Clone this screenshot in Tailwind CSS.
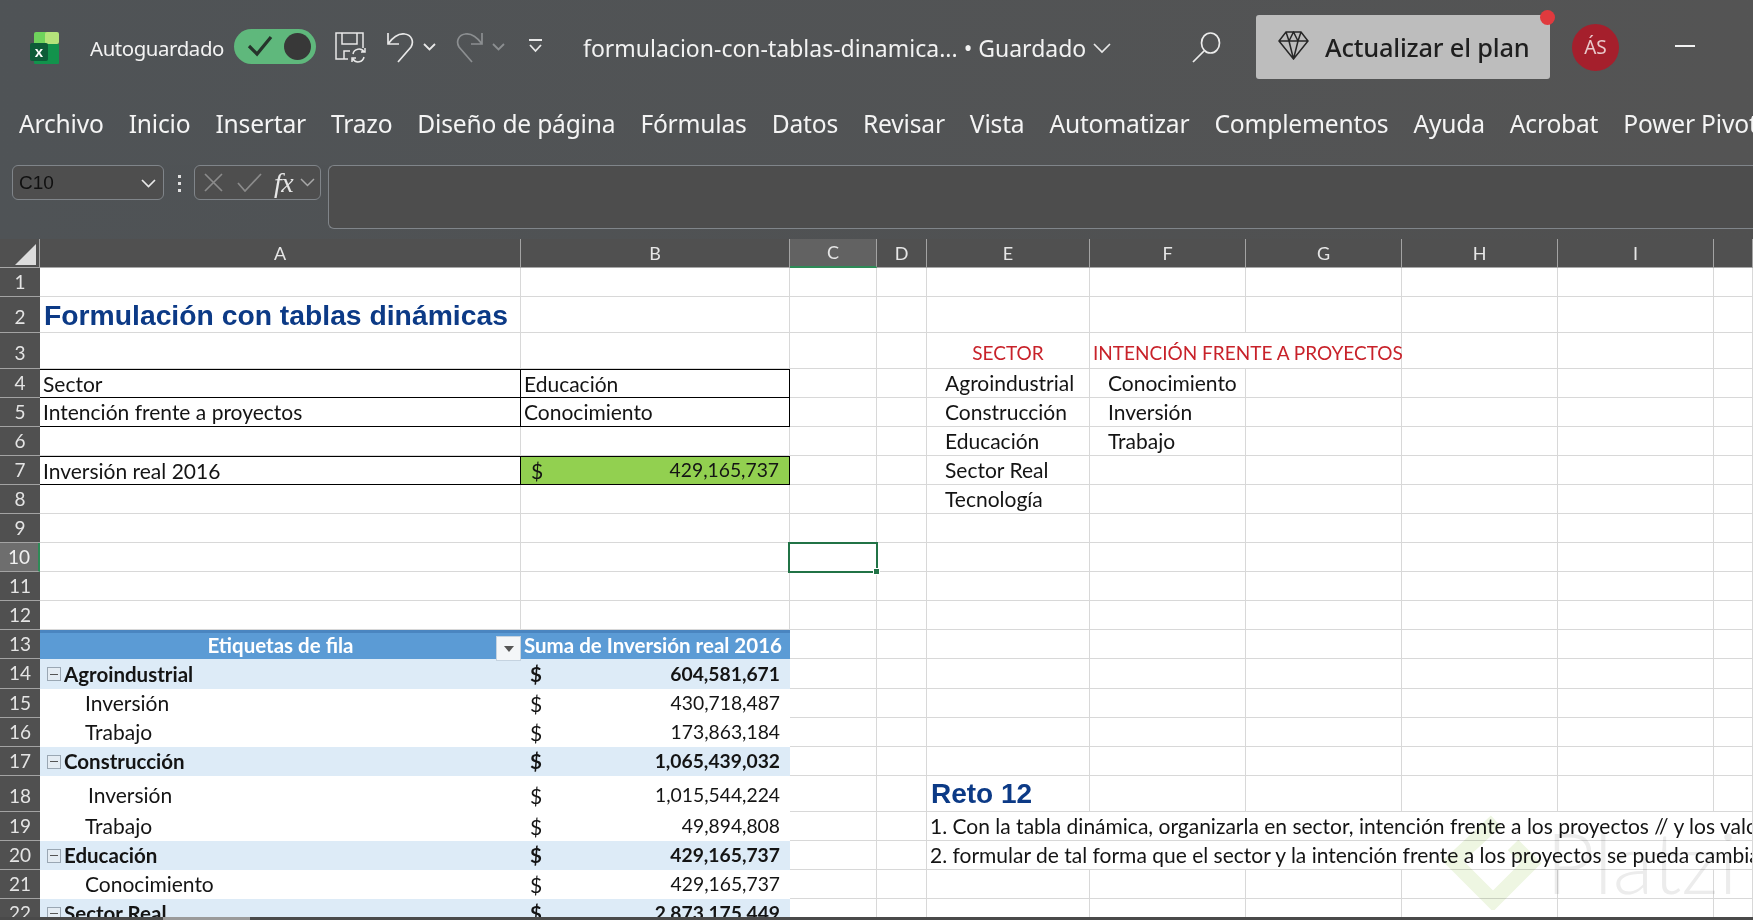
<!DOCTYPE html>
<html lang="es">
<head>
  <meta charset="UTF-8" />
  <title>Excel - formulacion-con-tablas-dinamicas</title>
  <script src="https://cdn.jsdelivr.net/npm/@tailwindcss/browser@4"></script>
</head>
<body class="w-[1753px] h-[920px] overflow-hidden bg-[#505355] font-['Noto_Sans',sans-serif] relative">

  <!-- barra de titulo -->
  <div class="h-[92px] pt-[4px] flex items-center text-[#f2f2f2] bg-gradient-to-r from-[#4f5356] to-[#545454]">
    <svg class="ml-[30px] w-[31px] h-[32px]" viewBox="0 0 31 32">
      <rect x="4" y="0" width="14" height="14" rx="2" fill="#6fd35c"/>
      <rect x="15" y="0" width="14" height="12" rx="2" fill="#b5e37b"/>
      <rect x="4" y="12" width="25" height="20" rx="1" fill="#12934c"/>
      <rect x="0" y="11" width="18" height="18" rx="2" fill="#0d5c38"/>
      <text x="9" y="25" text-anchor="middle" fill="#fff" font-size="15" font-weight="700" font-family="Liberation Sans">x</text>
    </svg>
    <span class="ml-[29px] text-[20.400px] tracking-[-0.4px] w-[144px] whitespace-nowrap">Autoguardado</span>
    <div class="w-[82px] h-[35px] mb-[4px] rounded-full bg-[#5fb87c] flex items-center justify-between pl-[13px] pr-[5px]">
      <svg class="w-[26px] h-[22px]" viewBox="0 0 26 22" fill="none" stroke="#26332b" stroke-width="3.2"><path d="M2 11l8 8L24 2"/></svg>
      <span class="w-[27px] h-[27px] rounded-full bg-[#383838]"></span>
    </div>
    <!-- guardar -->
    <svg class="ml-[19px] w-[32px] h-[31px] mb-[2px]" viewBox="0 0 32 31" fill="none" stroke="#e8e8e8" stroke-width="1.5">
      <path d="M13 27H1V1h27v15M7 1v11h15V1M9 27v-8h6"/>
      <path d="M18 22a6 6 0 0 1 11-2m1-4v4h-4M29 25a6 6 0 0 1-11 2m-1 3v-4h4"/>
    </svg>
    <!-- deshacer -->
    <svg class="ml-[19px] w-[29px] h-[31px] mb-[2px]" viewBox="0 0 29 31" fill="none" stroke="#e8e8e8" stroke-width="1.7">
      <path d="M2 1v11h11M2 12C7 5 13 1 19 2c7 1 9 8 6 13L12 30"/>
    </svg>
    <svg class="ml-[8px] w-[13px] h-[8px] mb-[2px]" viewBox="0 0 13 8" fill="none" stroke="#e8e8e8" stroke-width="1.8"><path d="M1 1l5.500 5.500L12 1"/></svg>
    <!-- rehacer -->
    <svg class="ml-[19px] w-[29px] h-[31px] mb-[2px]" viewBox="0 0 29 31" fill="none" stroke="#8c8f91" stroke-width="1.7">
      <path d="M27 1v11H16M27 12C22 5 16 1 10 2 3 3 1 10 4 15l13 15"/>
    </svg>
    <svg class="ml-[8px] w-[13px] h-[8px] mb-[2px]" viewBox="0 0 13 8" fill="none" stroke="#8c8f91" stroke-width="1.8"><path d="M1 1l5.500 5.500L12 1"/></svg>
    <svg class="ml-[23px] w-[15px] h-[14px] mb-[4px]" viewBox="0 0 15 14" fill="none" stroke="#e8e8e8" stroke-width="1.8"><path d="M1 1h13M2 6l5.500 6L13 6"/></svg>
    <span class="ml-[40px] text-[23px] w-[510px] whitespace-nowrap">formulacion-con-tablas-dinamica... • Guardado</span>
    <svg class="w-[18px] h-[11px]" viewBox="0 0 18 11" fill="none" stroke="#e8e8e8" stroke-width="1.7"><path d="M1 1l8 8 8-8"/></svg>
    <svg class="ml-[81px] w-[29px] h-[31px] mb-[2px]" viewBox="0 0 29 31" fill="none" stroke="#ececec" stroke-width="1.7"><ellipse cx="18.500" cy="11" rx="9" ry="10"/><path d="M12 19L1 30"/></svg>
    <div class="ml-[35px] mb-[2px] w-[294px] h-[64px] relative rounded-[3px] bg-[#bdbdbd] flex items-center text-[#1f1f1f]">
      <svg class="ml-[22px] w-[31px] h-[29px] mb-[4px]" viewBox="0 0 31 29" fill="none" stroke="#262626" stroke-width="1.5"><path d="M8 1h15l7 9-14.500 18L1 10zM1 10h29M8 1l3 9 4.500 18L20 10l3-9M11 10l4.500-9L20 10"/></svg>
      <span class="ml-[16px] text-[25.400px] font-medium tracking-[-0.2px] whitespace-nowrap">Actualizar el plan</span>
      <span class="absolute right-[-5px] top-[-5px] w-[15px] h-[15px] rounded-full bg-[#e03a3e]"></span>
    </div>
    <div class="ml-[22px] w-[47px] h-[47px] mb-[2px] rounded-full bg-[#a51f2c] flex items-center justify-center text-[19px] text-[#e9c9cb]">ÁS</div>
    <span class="ml-[56px] w-[20px] h-[2px] mb-[4px] bg-[#f2f2f2]"></span>
  </div>

  <!-- pestañas -->
  <nav class="h-[73px] pl-[19px] pb-[8px] flex items-center gap-[25px] text-[24.600px] tracking-[-0.2px] text-[#f4f4f4] whitespace-nowrap bg-gradient-to-r from-[#4f5356] to-[#545454]">
    <span>Archivo</span><span>Inicio</span><span>Insertar</span><span>Trazo</span><span>Diseño de página</span><span>Fórmulas</span><span>Datos</span><span>Revisar</span><span>Vista</span><span>Automatizar</span><span>Complementos</span><span>Ayuda</span><span>Acrobat</span><span>Power Pivot</span>
  </nav>

  <!-- barra de formulas -->
  <div class="h-[74px] flex items-start bg-gradient-to-r from-[#4f5356] to-[#505050]">
    <div class="ml-[12px] w-[152px] h-[35px] border border-[#80858a] rounded-[6px] bg-[#4e4e4e] flex items-center justify-between pl-[6px] pr-[7px] pt-[2px] font-['Liberation_Sans',sans-serif] text-[19px] text-[#101010]">
      C10
      <svg class="w-[15px] h-[9px]" viewBox="0 0 15 9" fill="none" stroke="#e8e8e8" stroke-width="1.700"><path d="M1 1l6.500 6.500L14 1"/></svg>
    </div>
    <div class="ml-[13px] w-[5px] h-[17px] mt-[10px] flex flex-col justify-between items-center">
      <span class="w-[3px] h-[3px] bg-[#e0e0e0]"></span><span class="w-[3px] h-[3px] bg-[#e0e0e0]"></span><span class="w-[3px] h-[3px] bg-[#e0e0e0]"></span>
    </div>
    <div class="ml-[12px] w-[127px] h-[35px] border border-[#80858a] rounded-[6px] bg-[#4e4e4e] flex items-center pl-[9px] text-[#e6e6e6]">
      <svg class="w-[19px] h-[19px]" viewBox="0 0 19 19" fill="none" stroke="#8b8b8b" stroke-width="1.700"><path d="M1 1l17 17M18 1L1 18"/></svg>
      <svg class="ml-[14px] w-[25px] h-[19px]" viewBox="0 0 25 19" fill="none" stroke="#8b8b8b" stroke-width="1.700"><path d="M1 10l7 8L24 1"/></svg>
      <span class="ml-[12px] font-['Liberation_Serif',serif] italic text-[28px] leading-none tracking-[-0.5px]">fx</span>
      <svg class="ml-[7px] w-[15px] h-[9px]" viewBox="0 0 15 9" fill="none" stroke="#a8a8a8" stroke-width="1.500"><path d="M1 1l6.500 6.500L14 1"/></svg>
    </div>
    <div class="ml-[7px] flex-1 h-[64px] border border-r-0 border-[#80858a] rounded-l-[6px] bg-[#4d4d4d]"></div>
  </div>

  <!-- hoja -->
  <div id="hoja" class="h-[678px] overflow-hidden grid grid-cols-[40px_481px_269px_87px_50px_163px_156px_156px_156px_156px_39px] grid-rows-[29px_29px_36px_36px_29px_29px_29px_29px_29px_29px_29px_29px_29px_29px_30px_29px_29px_29px_36px_29px_29px_29px_29px] font-['Lato',sans-serif] text-[21px] text-[#141414] bg-white relative"></div>
  <div class="h-[3px] flex bg-[#4a4a4a]"><span class="ml-[163px] w-[87px] bg-[#9a9a9a]"></span></div>

  <!-- marca de agua -->
  <div class="absolute left-[1444px] top-[813px] flex items-center pointer-events-none mix-blend-multiply">
    <svg class="w-[98px] h-[97px]" viewBox="0 0 98 97" fill="none" stroke="#eef6e2" stroke-width="15"><path d="M52 8L9 48l40 40 38-38-18-18"/></svg>
    <span class="ml-[4px] text-[84px] leading-none font-light text-[#ececec] font-['Lato',sans-serif]">Platzi</span>
  </div>

  <script>
    const line = "border-r border-b border-[#d8d8d8]";
    const flexCell = "flex items-center whitespace-nowrap min-w-0";
    const colHead = "bg-[#505050] border-r border-b border-r-[#a3a3a3] border-b-[#a8a8a8] flex items-center justify-center text-[#e6e6e6] text-[18px]";
    const rowHead = "bg-[#505050] border-b border-[#a3a3a3] flex items-center justify-center text-[#e4e4e4] text-[19px]";
    const num = "text-[19.300px]";

    // textos de la hoja: fila -> celdas especiales por columna
    const cells = {
      2: { A: ["Formulación con tablas dinámicas", "pl-[4px] pt-[2px] font-['Liberation_Sans',sans-serif] font-bold text-[28.300px] text-[#0c3a86]"] },
      3: {
        E: ["SECTOR", "justify-center pt-[6px] text-[19px] text-[#c8222a]"],
        F: ["INTENCIÓN FRENTE A PROYECTOS", "pl-[3px] pt-[6px] text-[19px] text-[#c8222a] col-span-2"]
      },
      4: {
        A: ["Sector", "pl-[3px] box"], B: ["Educación", "pl-[3px] box"],
        E: ["Agroindustrial", "pl-[18px]"], F: ["Conocimiento", "pl-[18px]"]
      },
      5: {
        A: ["Intención frente a proyectos", "pl-[3px] boxb"], B: ["Conocimiento", "pl-[3px] boxb"],
        E: ["Construcción", "pl-[18px]"], F: ["Inversión", "pl-[18px]"]
      },
      6: { E: ["Educación", "pl-[18px]"], F: ["Trabajo", "pl-[18px]"] },
      7: {
        A: ["Inversión real 2016", "pl-[3px] box"],
        B: [`<span>$</span><span class="${num}">429,165,737</span>`, "box justify-between pl-[10px] pr-[10px] bg-[#92d050]"],
        E: ["Sector Real", "pl-[18px]"]
      },
      8: { E: ["Tecnología", "pl-[18px]"] },
      18: { E: ["Reto 12", "pl-[4px] pt-[1px] font-['Liberation_Sans',sans-serif] font-bold text-[28px] text-[#0c3a86]"] },
      19: { E: ["1. Con la tabla dinámica, organizarla en sector, intención frente a los proyectos // y los valores", "pl-[3px] col-span-6 overflow-hidden"] },
      20: { E: ["2. formular de tal forma que el sector y la intención frente a los proyectos se pueda cambiar", "pl-[3px] col-span-6 overflow-hidden"] }
    };

    // filas de la tabla dinamica
    const pivot = {
      14: ["Agroindustrial", "604,581,671", true],
      15: ["Inversión", "430,718,487"],
      16: ["Trabajo", "173,863,184"],
      17: ["Construcción", "1,065,439,032", true],
      18: ["Inversión", "1,015,544,224", false, "pl-[48px] pt-[2px]"],
      19: ["Trabajo", "49,894,808"],
      20: ["Educación", "429,165,737", true],
      21: ["Conocimiento", "429,165,737"],
      22: ["Sector Real", "2,873,175,449", true]
    };

    const minus = `<span class="mr-[3px] w-[14px] h-[14px] border border-[#9aa7b3] bg-[#e4ecf3] flex items-center justify-center"><span class="w-[8px] h-px bg-[#555]"></span></span>`;
    const filter = `<span class="absolute right-0 top-[3px] w-[25px] h-[25px] bg-[#f4f6f8] border border-[#c5d3e0] flex items-center justify-center"><span class="border-x-[5px] border-x-transparent border-t-[6px] border-t-[#555]"></span></span>`;
    const columns = ["A","B","C","D","E","F","G","H","I","J"];
    let html = `<div class="bg-[#505050] border-r border-b border-r-[#a3a3a3] border-b-[#a8a8a8] flex items-end justify-end pr-[3px] pb-[2px]"><span class="border-l-[21px] border-l-transparent border-b-[21px] border-b-[#dcdcdc]"></span></div>`;
    for (const c of columns) {
      html += c === "C"
        ? `<div class="bg-[#626262] border-r border-b-2 border-r-[#a3a3a3] border-b-[#2e8b57] flex items-center justify-center text-[#e6e6e6] text-[18px]">C</div>`
        : `<div class="${colHead}">${c === "J" ? "" : c}</div>`;
    }

    for (let r = 1; r <= 22; r++) {
      const tall = (r === 2 || r === 3 || r === 18) ? " pt-[5px]" : "";
      html += r === 10
        ? `<div class="bg-[#6e6e6e] border-b border-r-2 border-b-[#a3a3a3] border-r-[#2e8b57] flex items-center justify-center text-[#f0f0f0] text-[19px]">10</div>`
        : `<div class="${rowHead}${tall}">${r}</div>`;
      if (r === 13) {
        html += `<div class="relative bg-[#5b9bd5] border-t-[3px] border-[#4a85c0] pb-[2px] text-white font-bold text-[20.500px] flex items-center justify-center">Etiquetas de fila${filter}</div>`;
        html += `<div class="bg-[#5b9bd5] border-t-[3px] border-[#4a85c0] pb-[2px] text-white font-bold text-[20.500px] flex items-center pl-[3px] whitespace-nowrap">Suma de Inversión real 2016</div>`;
      } else if (pivot[r]) {
        const [label, value, head, indent] = pivot[r];
        const band = head ? "bg-[#ddebf7] font-bold text-[20.500px]" : "bg-white";
        html += `<div class="${flexCell} ${band} ${head ? "pl-[7px]" : (indent || "pl-[45px] pb-[2px]")}">${head ? minus : ""}${label}</div>`;
        html += `<div class="${flexCell} ${band} justify-between pl-[9px] pr-[10px] ${r === 18 ? "pt-[3px]" : ""}"><span>$</span><span class="${num}">${value}</span></div>`;
      } else {
        for (const c of ["A", "B"]) {
          const cell = cells[r] && cells[r][c];
          html += cellHtml(cell);
        }
      }
      let skip = 0;
      for (const c of ["C","D","E","F","G","H","I","J"]) {
        if (skip > 0) { skip--; continue; }
        const cell = cells[r] && cells[r][c];
        if (cell && cell[1].includes("col-span-2")) skip = 1;
        if (cell && cell[1].includes("col-span-6")) skip = 5;
        html += cellHtml(cell);
      }
    }
    document.getElementById("hoja").innerHTML = html;

    function cellHtml(cell) {
      if (!cell) return `<div class="${line}"></div>`;
      let cls = cell[1];
      let borders = line;
      if (cls.includes("boxb")) {
        cls = cls.replace("boxb", "");
        borders = "border-r border-b border-black";
      } else if (cls.includes("box")) {
        cls = cls.replace("box", "");
        borders = "border-r border-y border-black";
      }
      return `<div class="${flexCell} ${borders} ${cls}">${cell[0]}</div>`;
    }
  </script>

  <!-- celda activa C10 -->
  <div class="absolute left-[788px] top-[542px] w-[90px] h-[31px] border-2 border-[#217346]">
    <span class="absolute right-[-4px] bottom-[-4px] w-[7px] h-[7px] bg-[#217346] border border-white"></span>
  </div>
</body>
</html>
